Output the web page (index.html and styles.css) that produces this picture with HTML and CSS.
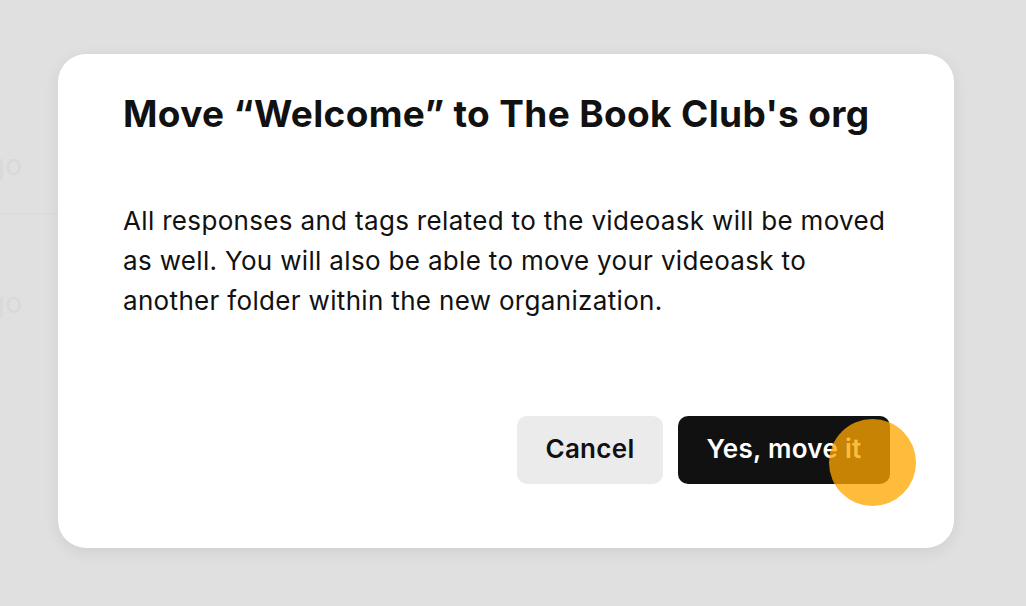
FILE: index.html
```html
<!DOCTYPE html>
<html>
<head>
<meta charset="utf-8">
<link rel="stylesheet" href="styles.css">
</head>
<body>
<div class="backdrop">
  <div class="behind">
    <div class="behind-row">go</div>
    <div class="behind-row second">go</div>
  </div>
  <div class="modal">
    <h1 class="title">Move “Welcome” to The Book Club's org</h1>
    <p class="text">All responses and tags related to the videoask will be moved as well. You will also be able to move your videoask to another folder within the new organization.</p>
    <div class="actions">
      <button class="btn btn-cancel">Cancel</button>
      <button class="btn btn-confirm">Yes, move it<span class="cursor"></span></button>
    </div>
  </div>
</div>
</body>
</html>
```
FILE: styles.css
```css
html, body {
  margin: 0;
  padding: 0;
  width: 1026px;
  height: 606px;
  overflow: hidden;
  background: #e0e0e0;
  font-family: Inter, "Noto Sans", sans-serif;
}
.backdrop {
  position: relative;
  width: 1026px;
  height: 606px;
}
.behind {
  position: absolute;
  left: -12px;
  top: 148px;
  width: 70px;
  color: #d9d9d9;
  font-size: 28px;
}
.behind-row {
  height: 65px;
  border-bottom: 1px solid #dadada;
}
.behind-row.second {
  margin-top: 72px;
  border-bottom: none;
}
.modal {
  position: absolute;
  left: 58px;
  top: 54px;
  width: 896px;
  height: 494px;
  box-sizing: border-box;
  background: #fff;
  border-radius: 28px;
  box-shadow: 0 4px 16px rgba(0,0,0,0.08);
  padding: 34px 50px 64px 65px;
  display: flex;
  flex-direction: column;
  color: #111;
}
.title {
  margin: 0;
  font-size: 37px;
  line-height: 52px;
  font-weight: 700;
  letter-spacing: 0.35px;
}
.text {
  margin: 61px 0 0 0;
  font-size: 26px;
  line-height: 40px;
  font-weight: 400;
  letter-spacing: 0.33px;
}
.actions {
  margin-top: auto;
  margin-right: 15px;
  display: flex;
  justify-content: flex-end;
  gap: 15px;
}
.btn {
  position: relative;
  height: 68px;
  border: none;
  border-radius: 10px;
  font-family: inherit;
  font-size: 26px;
  font-weight: 600;
  letter-spacing: 0.3px;
  padding: 0 0 3px 0;
}
.btn-cancel {
  background: #ebebeb;
  color: #111;
  width: 146px;
}
.btn-confirm {
  background: #111;
  color: #fff;
  width: 212px;
  margin-right: -1px;
}
.cursor {
  position: absolute;
  left: 151px;
  top: 3px;
  width: 87px;
  height: 87px;
  border-radius: 50%;
  background: rgba(255, 166, 0, 0.77);
}
```
